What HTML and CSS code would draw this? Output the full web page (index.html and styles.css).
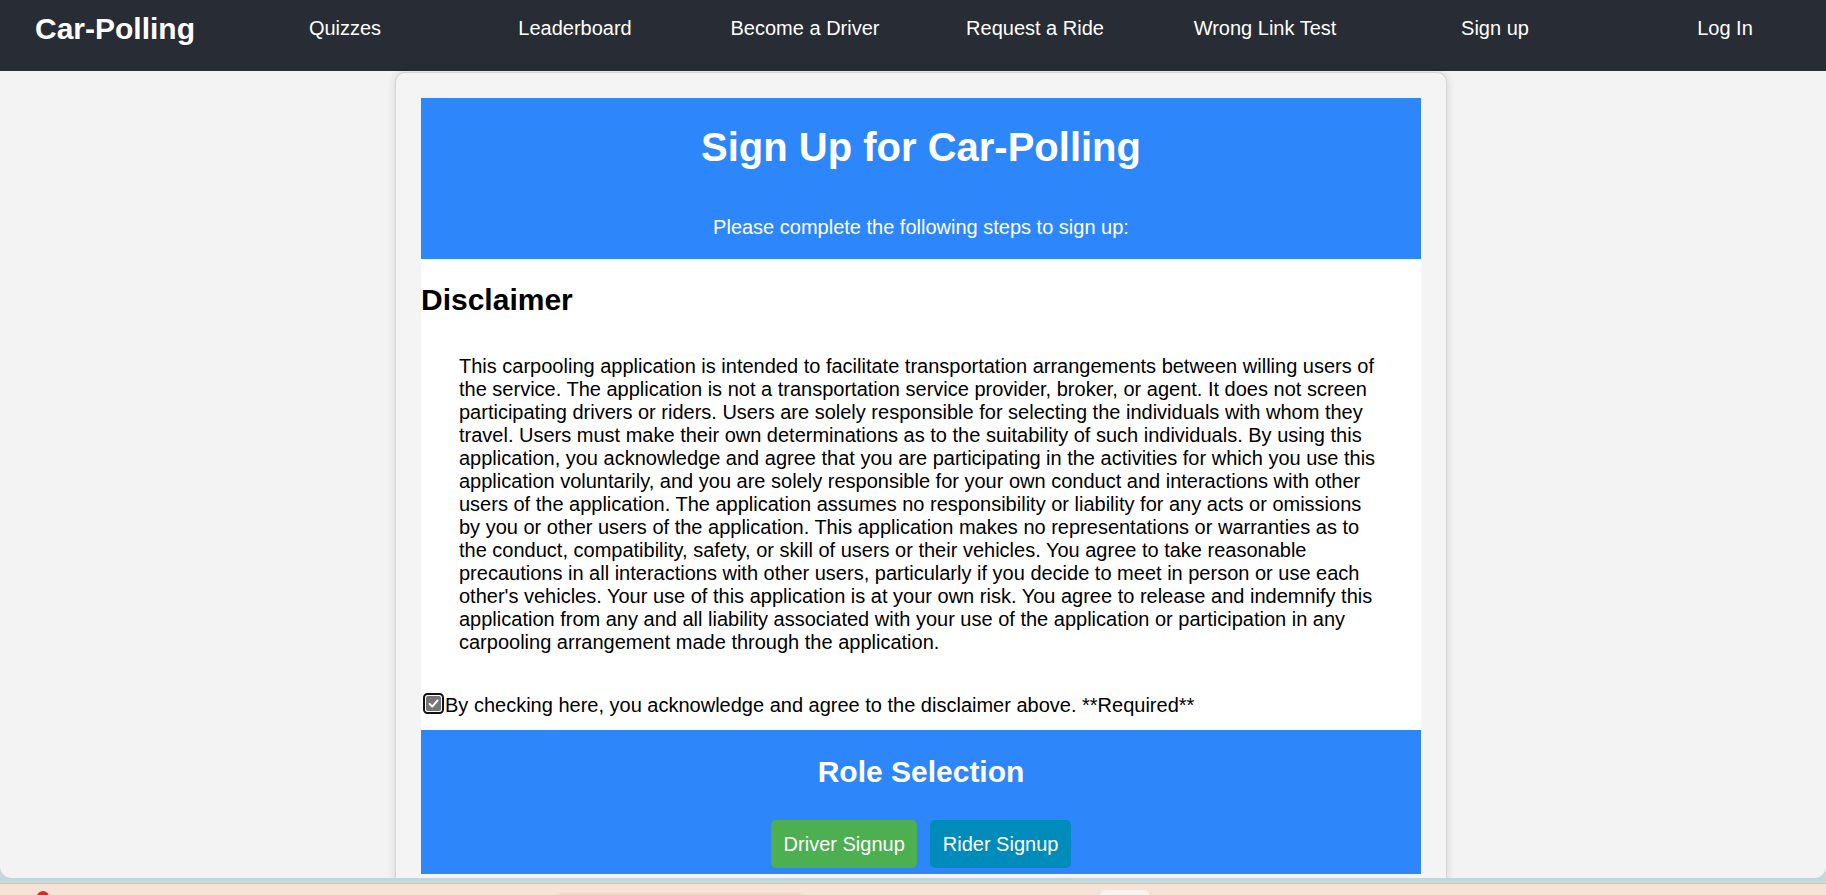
FILE: index.html
```html
<!DOCTYPE html>
<html lang="en">
<head>
<meta charset="utf-8">
<title>Car-Polling – Sign Up</title>
<link rel="stylesheet" href="styles.css">
</head>
<body>
<div class="screen">
  <header class="navbar">
    <a class="brand" href="#">Car-Polling</a>
    <a class="nav-link" href="#">Quizzes</a>
    <a class="nav-link" href="#">Leaderboard</a>
    <a class="nav-link" href="#">Become a Driver</a>
    <a class="nav-link" href="#">Request a Ride</a>
    <a class="nav-link" href="#">Wrong Link Test</a>
    <a class="nav-link" href="#">Sign up</a>
    <a class="nav-link" href="#">Log In</a>
  </header>
  <main class="page">
    <section class="card">
      <div class="hero">
        <h1>Sign Up for Car-Polling</h1>
        <p>Please complete the following steps to sign up:</p>
      </div>
      <div class="disclaimer">
        <h2>Disclaimer</h2>
        <p>This carpooling application is intended to facilitate transportation arrangements between willing users of the service. The application is not a transportation service provider, broker, or agent. It does not screen participating drivers or riders. Users are solely responsible for selecting the individuals with whom they travel. Users must make their own determinations as to the suitability of such individuals. By using this application, you acknowledge and agree that you are participating in the activities for which you use this application voluntarily, and you are solely responsible for your own conduct and interactions with other users of the application. The application assumes no responsibility or liability for any acts or omissions by you or other users of the application. This application makes no representations or warranties as to the conduct, compatibility, safety, or skill of users or their vehicles. You agree to take reasonable precautions in all interactions with other users, particularly if you decide to meet in person or use each other's vehicles. Your use of this application is at your own risk. You agree to release and indemnify this application from any and all liability associated with your use of the application or participation in any carpooling arrangement made through the application.</p>
        <label class="agree">
          <span class="checkbox" aria-hidden="true"><svg width="21" height="21" viewBox="0 0 21 21"><rect x="1" y="1" width="19" height="19" rx="3.5" fill="#ffffff" stroke="#111111" stroke-width="2"/><rect x="3" y="3" width="15" height="15" rx="2" fill="#767676"/><path d="M6.6 10.9 L9.3 13.6 L14.6 7.3" fill="none" stroke="#ffffff" stroke-width="2" stroke-linecap="round" stroke-linejoin="round"/></svg></span>
          <span>By checking here, you acknowledge and agree to the disclaimer above. **Required**</span>
        </label>
      </div>
      <div class="role">
        <h2>Role Selection</h2>
        <div class="role-buttons">
          <button class="btn btn-driver" type="button">Driver Signup</button>
          <button class="btn btn-rider" type="button">Rider Signup</button>
        </div>
      </div>
    </section>
  </main>
</div>
<div class="desk">
  <span class="desk-alert"></span>
  <span class="desk-tab"></span>
  <span class="desk-box"></span>
</div>
</body>
</html>
```

FILE: styles.css
```css
* {
  box-sizing: border-box;
}

html,
body {
  margin: 0;
  padding: 0;
}

body {
  width: 1826px;
  height: 895px;
  overflow: hidden;
  background: #c6dadd;
  font-family: "Liberation Sans", Arial, sans-serif;
  font-size: 20px;
  color: #000;
}

.screen {
  height: 878px;
  background: #f3f3f3;
  border-radius: 0 0 12px 12px;
  overflow: hidden;
}

/* ---------- Navbar ---------- */
.navbar {
  display: grid;
  grid-template-columns: 230px repeat(7, 230px);
  align-items: center;
  height: 71px;
  padding-bottom: 14px;
  background: #282c34;
}

.brand {
  padding-left: 35px;
  font-size: 30px;
  font-weight: bold;
  color: #ffffff;
  text-decoration: none;
  white-space: nowrap;
}

.nav-link {
  justify-self: center;
  font-size: 20px;
  color: #ffffff;
  text-decoration: none;
  white-space: nowrap;
}

/* ---------- Card ---------- */
.page {
  padding-top: 1px;
}

.card {
  width: 1052px;
  margin-left: calc(50% - 518px);
  padding: 25px;
  background: #f4f4f4;
  border: 1px solid #d4d4d4;
  border-radius: 10px;
  box-shadow: 0 0 10px rgba(0, 0, 0, 0.12);
}

.hero {
  padding: 26px 0 20px;
  background: #2e87fa;
  color: #ffffff;
  text-align: center;
}

.hero h1 {
  margin: 0 0 46px;
  font-size: 40px;
  line-height: 46px;
  font-weight: bold;
}

.hero p {
  margin: 0;
  font-size: 20px;
  line-height: 23px;
}

.disclaimer {
  padding: 24px 0 13px;
  background: #ffffff;
}

.disclaimer h2 {
  margin: 0;
  font-size: 30px;
  line-height: 34px;
  font-weight: bold;
}

.disclaimer p {
  margin: 38px 38px 0;
  font-size: 20px;
  line-height: 23px;
}

.agree {
  display: flex;
  align-items: flex-start;
  margin-top: 40px;
  font-size: 20px;
  line-height: 23px;
}

.checkbox {
  flex: none;
  display: block;
  width: 21px;
  height: 21px;
  margin: -1px 1px 0 2px;
}

.checkbox svg {
  display: block;
}

.role {
  padding: 25px 0 6px;
  background: #2e87fa;
  color: #ffffff;
  text-align: center;
}

.role h2 {
  margin: 0 0 31px;
  font-size: 30px;
  line-height: 34px;
  font-weight: bold;
}

.role-buttons {
  display: flex;
  justify-content: center;
  gap: 13px;
}

.btn {
  height: 48px;
  padding: 0 12.5px;
  border: none;
  border-radius: 5px;
  font-family: inherit;
  font-size: 20px;
  color: #ffffff;
  cursor: pointer;
}

.btn-driver {
  background: #4caf50;
}

.btn-rider {
  background: #008cba;
}

/* ---------- Desktop strip below the window ---------- */
.desk {
  display: flex;
  align-items: flex-start;
  height: 17px;
  background: linear-gradient(#bfd5d8 0, #cadcde 5px, #d7c2b3 5px, #d7c2b3 6px, #f8e2d5 6px);
}

.desk-alert {
  flex: none;
  width: 12px;
  height: 12px;
  margin: 13px 0 0 37px;
  border-radius: 50%;
  background: #c9302c;
}

.desk-tab {
  flex: none;
  width: 246px;
  height: 4px;
  margin: 15px 0 0 508px;
  border-radius: 3px 3px 0 0;
  background: #eed7c9;
}

.desk-box {
  flex: none;
  width: 49px;
  height: 8px;
  margin: 12px 0 0 297px;
  border-radius: 5px 5px 0 0;
  background: #fdf2ec;
}
```
